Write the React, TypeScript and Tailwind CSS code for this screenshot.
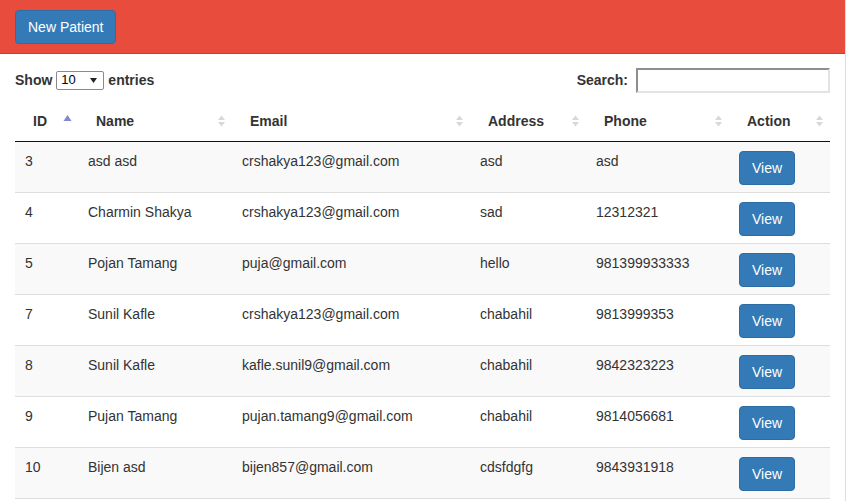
const patients = [
  { id: 3, name: 'asd asd', email: 'crshakya123@gmail.com', address: 'asd', phone: 'asd' },
  { id: 4, name: 'Charmin Shakya', email: 'crshakya123@gmail.com', address: 'sad', phone: '12312321' },
  { id: 5, name: 'Pojan Tamang', email: 'puja@gmail.com', address: 'hello', phone: '981399933333' },
  { id: 7, name: 'Sunil Kafle', email: 'crshakya123@gmail.com', address: 'chabahil', phone: '9813999353' },
  { id: 8, name: 'Sunil Kafle', email: 'kafle.sunil9@gmail.com', address: 'chabahil', phone: '9842323223' },
  { id: 9, name: 'Pujan Tamang', email: 'pujan.tamang9@gmail.com', address: 'chabahil', phone: '9814056681' },
  { id: 10, name: 'Bijen asd', email: 'bijen857@gmail.com', address: 'cdsfdgfg', phone: '9843931918' },
];

const columns = [
  { label: 'ID', width: 63, active: true },
  { label: 'Name', width: 154 },
  { label: 'Email', width: 238 },
  { label: 'Address', width: 116 },
  { label: 'Phone', width: 143 },
  { label: 'Action', width: 101 },
];

function SortIcon({ active }: { active?: boolean }) {
  if (active) {
    return (
      <svg width="9" height="14" viewBox="0 0 9 14" className="shrink-0">
        <path d="M4.5 1 L8.5 7 L0.5 7 Z" fill="#8587cf" />
      </svg>
    );
  }
  return (
    <svg width="9" height="14" viewBox="0 0 9 14" className="shrink-0">
      <path d="M4.5 1.5 L8 6 L1 6 Z" fill="#d8d8d8" />
      <path d="M4.5 12.5 L8 8 L1 8 Z" fill="#d8d8d8" />
    </svg>
  );
}

export default function App() {
  return (
    <div
      className="w-[848px] h-[501px] overflow-hidden bg-white text-[14px] text-[#333]"
      style={{ fontFamily: '"Liberation Sans", Arial, sans-serif' }}
    >
      <div className="w-[846px] h-full border-r border-[#ddd]">
        <div className="h-[54px] bg-[#e74c3c] border-b border-[#c9402f] px-[15px] pt-[10px]">
          <button className="h-[34px] px-[12px] rounded-[4px] bg-[#337ab7] border border-[#2e6da4] text-white leading-[20px]">
            New Patient
          </button>
        </div>

        <div className="px-[15px]">
          <div className="flex justify-between items-start h-[47px] pt-[16px]">
            <div className="flex items-center gap-[4px] font-bold leading-[20px]">
              <span>Show</span>
              <div className="flex items-center justify-between w-[48px] h-[19px] border border-[#8a8a8a] rounded-[2px] pl-[4px] pr-[6px] font-normal text-[13px] text-black">
                <span>10</span>
                <svg width="7" height="5" viewBox="0 0 7 5">
                  <path d="M0 0 L7 0 L3.5 5 Z" fill="#222" />
                </svg>
              </div>
              <span>entries</span>
            </div>
            <div className="flex items-center gap-[8px] font-bold -mt-[2px]">
              <span>Search:</span>
              <div className="w-[194px] h-[25px] border-2 border-t-[#8f8f8f] border-l-[#8f8f8f] border-b-[#e3e3e3] border-r-[#e3e3e3] bg-white" />
            </div>
          </div>

          <table className="w-[815px] table-fixed border-collapse">
            <colgroup>
              {columns.map((c) => (
                <col key={c.label} style={{ width: c.width }} />
              ))}
            </colgroup>
            <thead>
              <tr>
                {columns.map((c) => (
                  <th
                    key={c.label}
                    className="text-left font-bold pl-[18px] pr-[6px] py-[10px] leading-[20px] border-b border-[#111]"
                  >
                    <div className="flex items-center justify-between">
                      <span>{c.label}</span>
                      <SortIcon active={c.active} />
                    </div>
                  </th>
                ))}
              </tr>
            </thead>
            <tbody>
              {patients.map((p, i) => (
                <tr key={p.id} className={i % 2 === 0 ? 'bg-[#f9f9f9]' : 'bg-white'}>
                  {[p.id, p.name, p.email, p.address, p.phone].map((v, j) => (
                    <td key={j} className="align-top pt-[9px] pb-[7px] px-[10px] leading-[20px] border-b border-[#ddd] whitespace-nowrap">
                      {v}
                    </td>
                  ))}
                  <td className="align-top pt-[9px] pb-[7px] px-[10px] border-b border-[#ddd]">
                    <button className="h-[34px] px-[12px] rounded-[4px] bg-[#337ab7] border border-[#2e6da4] text-white leading-[20px]">
                      View
                    </button>
                  </td>
                </tr>
              ))}
            </tbody>
          </table>
        </div>
      </div>
    </div>
  );
}
